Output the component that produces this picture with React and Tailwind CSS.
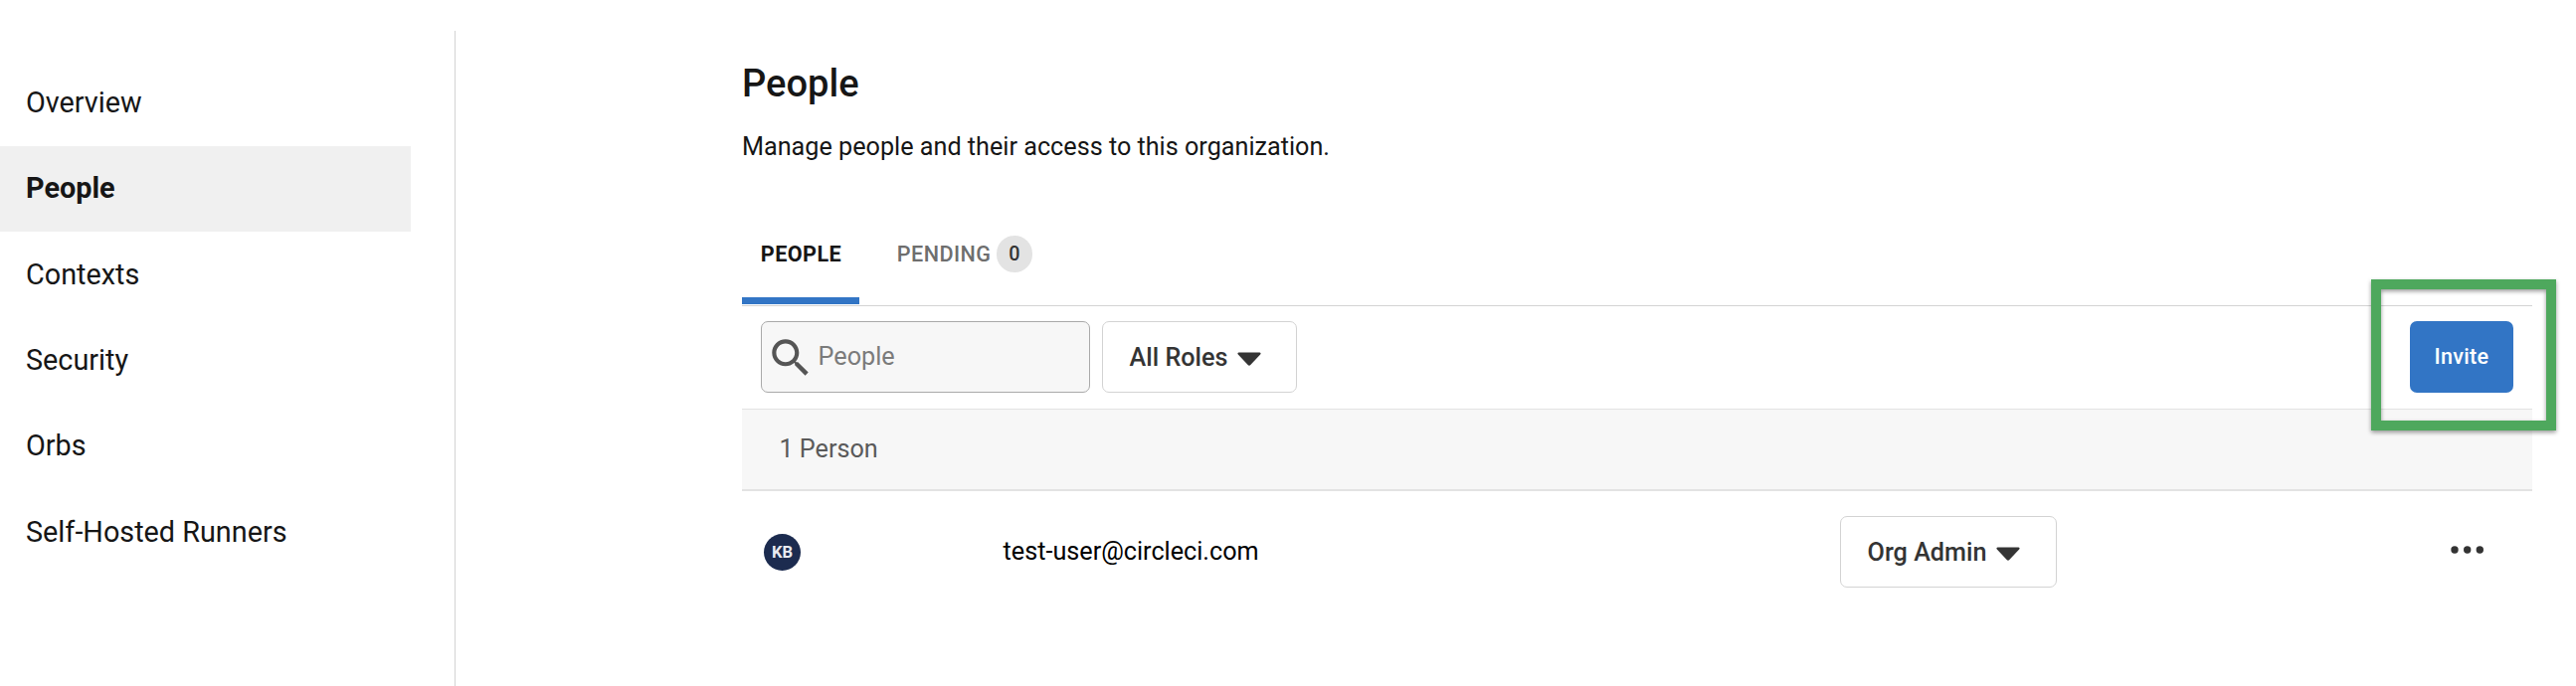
const NAV = ["Overview", "People", "Contexts", "Security", "Orbs", "Self-Hosted Runners"];

function Caret() {
  return (
    <svg viewBox="0 0 24 14" className="relative top-px ml-[9.4px] h-[14px] w-[24px] shrink-0" fill="#343434">
      <path d="M1.6 0.6H22.4C23.6 0.6 24 1.8 23.2 2.6L13.3 13.1C12.5 13.9 11.5 13.9 10.7 13.1L0.8 2.6C0 1.8 0.4 0.6 1.6 0.6Z" />
    </svg>
  );
}

function Dropdown({ label, className }) {
  return (
    <button
      className={
        "flex h-[72px] items-center rounded-[7px] border border-[#d3d3d3] bg-white pt-px pl-[26.6px] text-[25.2px] leading-[29px] font-medium whitespace-nowrap text-[#343434] " +
        className
      }
    >
      {label}
      <Caret />
    </button>
  );
}

function Sidebar() {
  return (
    <aside className="mt-[31px] w-[458px] shrink-0 border-r border-[#d3d3d3] pt-[29.6px]">
      <nav className="flex w-[413px] flex-col">
        {NAV.map((item) => (
          <a
            key={item}
            className={
              "flex h-[86.4px] items-center pb-[2px] pl-[26px] text-[28.8px] leading-[34px] text-[#161616] " +
              (item === "People" ? "bg-[#f0f0f0] font-bold" : "font-normal")
            }
          >
            {item}
          </a>
        ))}
      </nav>
    </aside>
  );
}

function Tabs() {
  return (
    <div className="mt-[51px] flex h-[95px] gap-[19px] border-b border-[#d3d3d3] text-[21.6px] leading-[25px] tracking-[0.45px]">
      <div className="flex w-[118px] flex-col">
        <div className="flex h-[85px] items-center pl-[18.8px] font-bold text-[#161616]">PEOPLE</div>
        <div className="mt-px h-[7px] bg-[#3275c5]" />
      </div>
      <div className="flex h-[85px] items-center pl-[18.8px] font-medium text-[#6e6e6e]">
        PENDING
        <span className="ml-[5.2px] flex h-[37px] w-[36.5px] items-center justify-center rounded-full bg-[#e3e3e3] text-[19.8px] leading-[23px] tracking-normal text-[#343434]">
          0
        </span>
      </div>
    </div>
  );
}

function Toolbar() {
  return (
    <div className="flex h-[103px] gap-[12px] px-[19px] pt-[15px]">
      <div className="flex h-[72px] w-[331px] items-center rounded-[7px] border border-[#aaaaaa] bg-[#f7f7f7] pl-[4px]">
        <svg viewBox="0 0 24 24" className="relative top-px size-[50px]" fill="#555555">
          <path d="M15.5 14h-.79l-.28-.27C15.41 12.59 16 11.11 16 9.5 16 5.91 13.09 3 9.5 3S3 5.91 3 9.5 5.91 16 9.5 16c1.61 0 3.09-.59 4.23-1.57l.27.28v.79l5 4.99L20.49 19l-4.99-5zm-6 0C7.01 14 5 11.99 5 9.5S7.01 5 9.5 5 14 7.01 14 9.5 11.99 14 9.5 14z" />
        </svg>
        <span className="ml-[2.6px] pb-px text-[25.2px] leading-[29px] text-[#7b7b7b]">People</span>
      </div>
      <Dropdown label="All Roles" className="w-[196px]" />
      <div className="relative ml-auto">
        <button className="flex h-[72px] w-[104px] items-center justify-center rounded-[7px] bg-[#3275c5] pb-px text-[21.6px] leading-[25px] font-medium tracking-[0.3px] text-white">
          Invite
        </button>
        <div className="absolute -top-[42px] -left-[39px] h-[152px] w-[186px] border-[10px] border-[#4ea85d] drop-shadow-[0_2px_2px_rgba(0,0,0,0.4)]" />
      </div>
    </div>
  );
}

function PersonRow() {
  return (
    <div className="flex h-[122px] items-center">
      <div className="mt-px ml-[22px] flex size-[37px] items-center justify-center rounded-full bg-[#1c2b4f] text-[16.6px] leading-[19px] font-bold text-[#e8eaf0]">
        KB
      </div>
      <div className="ml-[203.6px] w-[841.4px] pb-px text-[25.2px] leading-[29px] text-black">test-user@circleci.com</div>
      <Dropdown label="Org Admin" className="w-[218px]" />
      <svg viewBox="0 0 34 8" className="relative -top-[1.7px] ml-[396px] h-[8px] w-[34px]" fill="#333333">
        <circle cx="4" cy="4" r="3.7" />
        <circle cx="16.7" cy="4" r="3.7" />
        <circle cx="29.3" cy="4" r="3.7" />
      </svg>
    </div>
  );
}

export default function App() {
  return (
    <div className="flex h-[690px] w-[2590px] overflow-hidden bg-white font-['Roboto',sans-serif]">
      <Sidebar />
      <main className="ml-[288px] w-[1800px] pt-[62px]">
        <h1 className="text-[38.1px] leading-[45px] font-medium text-[#161616]">People</h1>
        <p className="mt-[26px] text-[25.2px] leading-[29px] text-[#161616]">
          Manage people and their access to this organization.
        </p>
        <Tabs />
        <Toolbar />
        <div className="flex h-[83px] items-center border-t border-b-2 border-[#e3e3e3] bg-[#f7f7f7] pb-px pl-[37.4px] text-[25.2px] leading-[29px] text-[#5a5a5a]">
          1 Person
        </div>
        <PersonRow />
      </main>
    </div>
  );
}
